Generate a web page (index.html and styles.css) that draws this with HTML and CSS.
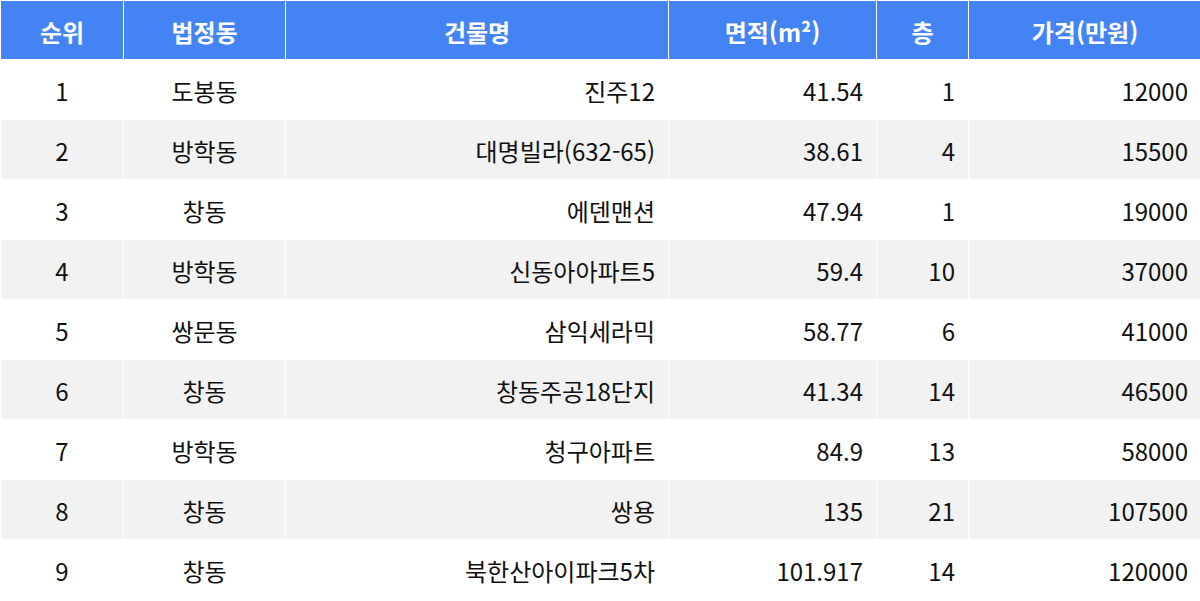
FILE: index.html
```html
<!DOCTYPE html>
<html lang="ko">
<head>
<meta charset="utf-8">
<link rel="stylesheet" href="styles.css">
</head>
<body>
<table class="grid">
  <colgroup>
    <col class="c1"><col class="c2"><col class="c3"><col class="c4"><col class="c5"><col class="c6">
  </colgroup>
  <thead>
    <tr><th>순위</th><th>법정동</th><th>건물명</th><th>면적(m²)</th><th>층</th><th>가격(만원)</th></tr>
  </thead>
  <tbody>
    <tr><td class="ctr">1</td><td class="ctr">도봉동</td><td class="num">진주12</td><td class="num">41.54</td><td class="num">1</td><td class="num">12000</td></tr>
    <tr><td class="ctr">2</td><td class="ctr">방학동</td><td class="num">대명빌라(632-65)</td><td class="num">38.61</td><td class="num">4</td><td class="num">15500</td></tr>
    <tr><td class="ctr">3</td><td class="ctr">창동</td><td class="num">에덴맨션</td><td class="num">47.94</td><td class="num">1</td><td class="num">19000</td></tr>
    <tr><td class="ctr">4</td><td class="ctr">방학동</td><td class="num">신동아아파트5</td><td class="num">59.4</td><td class="num">10</td><td class="num">37000</td></tr>
    <tr><td class="ctr">5</td><td class="ctr">쌍문동</td><td class="num">삼익세라믹</td><td class="num">58.77</td><td class="num">6</td><td class="num">41000</td></tr>
    <tr><td class="ctr">6</td><td class="ctr">창동</td><td class="num">창동주공18단지</td><td class="num">41.34</td><td class="num">14</td><td class="num">46500</td></tr>
    <tr><td class="ctr">7</td><td class="ctr">방학동</td><td class="num">청구아파트</td><td class="num">84.9</td><td class="num">13</td><td class="num">58000</td></tr>
    <tr><td class="ctr">8</td><td class="ctr">창동</td><td class="num">쌍용</td><td class="num">135</td><td class="num">21</td><td class="num">107500</td></tr>
    <tr><td class="ctr">9</td><td class="ctr">창동</td><td class="num">북한산아이파크5차</td><td class="num">101.917</td><td class="num">14</td><td class="num">120000</td></tr>
  </tbody>
</table>
</body>
</html>
```
FILE: styles.css
```css
html, body {
  margin: 0;
  padding: 0;
  background: #ffffff;
}
body {
  font-family: "Noto Sans CJK KR", "Noto Sans", sans-serif;
  color: #111111;
}
.grid {
  width: 1201px;
  border-collapse: collapse;
  table-layout: fixed;
  font-size: 24px;
}
.c1 { width: 123px; }
.c2 { width: 162px; }
.c3 { width: 383px; }
.c4 { width: 208px; }
.c5 { width: 92px; }
.c6 { width: 233px; }
.grid th,
.grid td {
  border: 1px solid #ffffff;
  height: 59px;
  padding: 3px 13px 0;
  box-sizing: border-box;
  line-height: 1;
}
.grid th {
  background: #4483f4;
  color: #ffffff;
  font-weight: 700;
  text-align: center;
  height: 59px;
}
.grid tbody tr:nth-child(even) td {
  background: #f2f2f2;
}
.grid tbody td {
  height: 60px;
}
.ctr { text-align: center; }
.num { text-align: right; }
```
